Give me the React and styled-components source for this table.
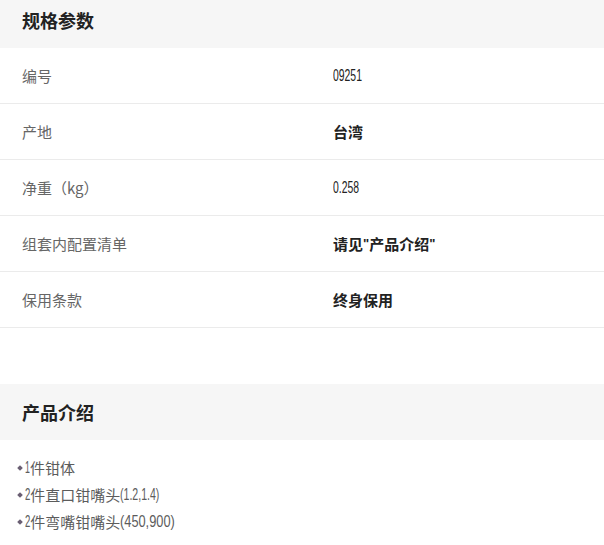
import React from "react"
import styled, { createGlobalStyle } from "styled-components"

const GlobalStyle = createGlobalStyle`
  body {
    margin: 0;
    background: #fff;
    font-family: "Noto Sans CJK SC", "Noto Sans", sans-serif;
  }
`

const Page = styled.div`
  width: 604px;
  display: flex;
  flex-direction: column;
`

const SectionTitle = styled.h2`
  margin: ${(p) => p.$gap || 0}px 0 0;
  height: ${(p) => (p.$tall ? 56 : 48)}px;
  padding: 0 22px ${(p) => (p.$tall ? 0 : 8)}px;
  box-sizing: border-box;
  display: flex;
  align-items: center;
  background: #f6f6f6;
  color: #222;
  font-size: 18px;
  font-weight: 700;
`

const SpecTable = styled.div`
  display: flex;
  flex-direction: column;
`

const SpecRow = styled.div`
  display: grid;
  grid-template-columns: 311px 1fr;
  align-items: center;
  height: 56px;
  padding-left: 22px;
  border-bottom: 1px solid #ebebeb;
  box-sizing: border-box;
`

const Label = styled.span`
  font-size: 15px;
  color: #666;
`

const Value = styled.span`
  display: flex;
  align-items: center;
  font-size: 15px;
  color: #222;
  font-weight: ${(p) => (p.$bold ? 700 : 400)};
`

const Quote = styled.span`
  font-family: "Liberation Sans", Arial, sans-serif;
  font-weight: 700;
  font-size: 13px;
`

const NumBox = styled.span`
  display: inline-block;
  white-space: nowrap;
  font-family: "Liberation Sans", Arial, sans-serif;
  font-size: ${(p) => p.$size}px;
  font-weight: 400;
  transform: scaleX(${(p) => p.$scale});
  transform-origin: left center;
`

// narrow digits: squeeze Liberation Sans and keep the advance in step
const widths = { ".": 0.278, ",": 0.278, "(": 0.333, ")": 0.333 }
const Num = ({ children, size = 16, scale = 0.75 }) => {
  const em = [...children].reduce((w, c) => w + (widths[c] || 0.556), 0)
  return (
    <NumBox $size={size} $scale={scale} style={{ width: em * size * scale }}>
      {children}
    </NumBox>
  )
}

const List = styled.ul`
  list-style: none;
  margin: 0;
  padding: 14px 0 0 17px;
`

const Item = styled.li`
  display: flex;
  align-items: center;
  height: 27px;
  font-size: 15px;
  color: #5c5c5c;
  &::before {
    content: "";
    width: 4px;
    height: 4px;
    margin: 0 3px 0 1px;
    background: #6a5f73;
    transform: rotate(45deg);
  }
`

const specs = [
  { label: "编号", value: <Num scale={0.65}>09251</Num> },
  { label: "产地", value: "台湾", bold: true },
  { label: <>净重（kg）</>, value: <Num scale={0.65}>0.258</Num> },
  {
    label: "组套内配置清单",
    value: <>请见<Quote>"</Quote>产品介绍<Quote>"</Quote></>,
    bold: true,
  },
  { label: "保用条款", value: "终身保用", bold: true },
]

const items = [
  <><Num scale={0.55}>1</Num>件钳体</>,
  <><Num scale={0.6}>2</Num>件直口钳嘴头<Num scale={0.66}>(1.2,1.4)</Num></>,
  <><Num scale={0.6}>2</Num>件弯嘴钳嘴头<Num scale={0.8}>(450,900)</Num></>,
]

export default function App() {
  return (
    <>
      <GlobalStyle />
      <Page>
        <SectionTitle>规格参数</SectionTitle>
        <SpecTable>
          {specs.map((s, i) => (
            <SpecRow key={i}>
              <Label>{s.label}</Label>
              <Value $bold={s.bold}>{s.value}</Value>
            </SpecRow>
          ))}
        </SpecTable>
        <SectionTitle $gap={56} $tall>产品介绍</SectionTitle>
        <List>
          {items.map((it, i) => (
            <Item key={i}>{it}</Item>
          ))}
        </List>
      </Page>
    </>
  )
}
